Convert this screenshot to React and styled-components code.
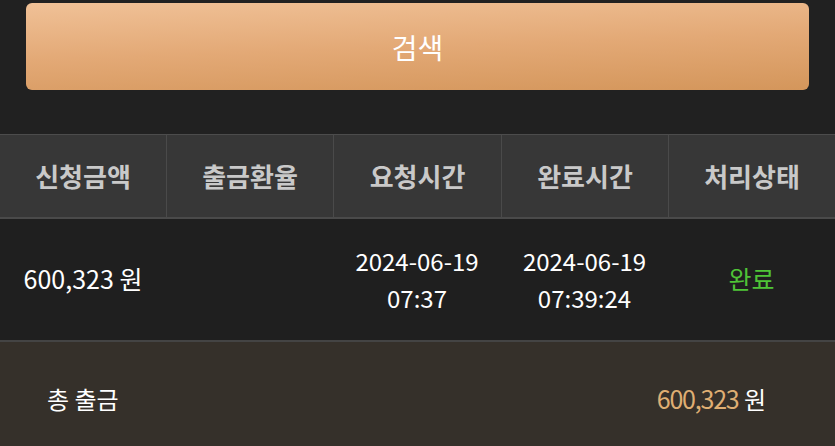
import React from 'react';
import styled, { createGlobalStyle } from 'styled-components';

const GlobalStyle = createGlobalStyle`
  html, body {
    margin: 0;
    padding: 0;
    background: #212121;
  }
  body {
    font-family: "Noto Sans CJK KR", "Noto Sans", sans-serif;
    color: #ffffff;
  }
`;

const Page = styled.div`
  width: 835px;
  height: 446px;
  overflow: hidden;
  background: #212121;
`;

const SearchWrap = styled.div`
  padding: 3px 26px 0 26px;
  height: 134px;
  box-sizing: border-box;
`;

const SearchButton = styled.button`
  width: 100%;
  height: 87px;
  border: none;
  border-radius: 6px;
  background: linear-gradient(178deg, #f0c197 0%, #e3a976 50%, #d4965b 100%);
  color: #ffffff;
  font-family: inherit;
  font-size: 28px;
  font-weight: 400;
  display: flex;
  align-items: center;
  justify-content: center;
  padding: 0;
`;

const Table = styled.div`
  display: grid;
  grid-template-columns: 166px 167px 168px 167px 1fr;
`;

const HeadCell = styled.div`
  height: 85px;
  background: #373737;
  border-top: 1px solid #4c4c4c;
  border-bottom: 2px solid #4a4a4a;
  border-left: ${p => (p.first ? 'none' : '1px solid #4a4a4a')};
  display: flex;
  align-items: center;
  justify-content: center;
  color: #c9c9c9;
  font-size: 26px;
  font-weight: 700;
  padding-bottom: 2px;
  box-sizing: border-box;
`;

const BodyCell = styled.div`
  height: 123px;
  background: #1f1f1f;
  border-bottom: 2px solid #444444;
  display: flex;
  flex-direction: column;
  align-items: center;
  justify-content: center;
  color: ${p => p.color || '#ffffff'};
  font-size: ${p => p.size || 24}px;
  line-height: 37px;
  box-sizing: border-box;
  padding-bottom: 2px;
`;

const Footer = styled.div`
  height: 104px;
  background: #35302a;
  display: flex;
  align-items: center;
  justify-content: space-between;
  padding: 8px 69px 0 47px;
  box-sizing: border-box;
  font-size: 24px;
`;

const TotalLabel = styled.span`
  color: #ffffff;
`;

const TotalValue = styled.span`
  color: #ffffff;
`;

const Gold = styled.span`
  color: #dfae73;
  font-size: 25px;
  letter-spacing: -1.2px;
`;

const headers = ['신청금액', '출금환율', '요청시간', '완료시간', '처리상태'];

export default function App() {
  return (
    <Page>
      <GlobalStyle />
      <SearchWrap>
        <SearchButton>검색</SearchButton>
      </SearchWrap>
      <Table>
        {headers.map((h, i) => (
          <HeadCell key={h} first={i === 0}>{h}</HeadCell>
        ))}
        <BodyCell size={25}>600,323 원</BodyCell>
        <BodyCell />
        <BodyCell>
          <span>2024-06-19</span>
          <span>07:37</span>
        </BodyCell>
        <BodyCell>
          <span>2024-06-19</span>
          <span>07:39:24</span>
        </BodyCell>
        <BodyCell color="#4fc437" size={25}>완료</BodyCell>
      </Table>
      <Footer>
        <TotalLabel>총 출금</TotalLabel>
        <TotalValue>
          <Gold>600,323</Gold> 원
        </TotalValue>
      </Footer>
    </Page>
  );
}
